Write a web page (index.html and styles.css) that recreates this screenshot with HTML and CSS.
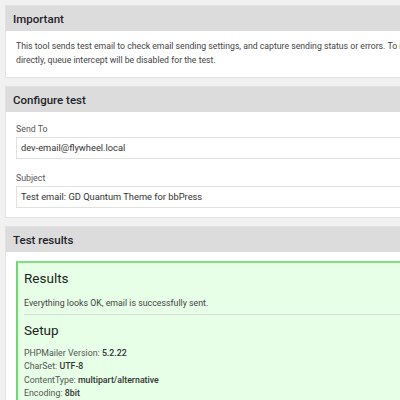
FILE: index.html
```html
<!DOCTYPE html>
<html>
<head>
<meta charset="utf-8">
<link rel="stylesheet" href="styles.css">
</head>
<body>
<div class="page">
  <div class="panel">
    <div class="panel-head">Important</div>
    <div class="panel-body">
      <p class="note">This tool sends test email to check email sending settings, and capture sending status or errors. To make sure that email is sent directly, queue intercept will be disabled for the test.</p>
    </div>
  </div>
  <div class="panel">
    <div class="panel-head">Configure test</div>
    <div class="panel-body form">
      <label class="lbl">Send To</label>
      <div class="input">dev-email@flywheel.local</div>
      <label class="lbl">Subject</label>
      <div class="input">Test email: GD Quantum Theme for bbPress</div>
    </div>
  </div>
  <div class="panel">
    <div class="panel-head">Test results</div>
    <div class="panel-body results">
      <div class="success">
        <h3>Results</h3>
        <p class="msg">Everything looks OK, email is successfully sent.</p>
        <hr>
        <h3>Setup</h3>
        <ul class="info">
          <li>PHPMailer Version: <b>5.2.22</b></li>
          <li>CharSet: <b>UTF-8</b></li>
          <li>ContentType: <b>multipart/alternative</b></li>
          <li>Encoding: <b>8bit</b></li>
        </ul>
      </div>
    </div>
  </div>
</div>
</body>
</html>
```
FILE: styles.css
```css
html, body { margin: 0; padding: 0; }
body {
  background: #f1f1f1;
  font-family: Roboto, "Open Sans", sans-serif;
  color: #333;
  width: 530px;
  overflow: hidden;
}
.page {
  padding: 5px 0 0 5px;
  display: flex;
  flex-direction: column;
  gap: 8px;
}
.panel {
  border: 1px solid #e2e2e2;
  background: #fff;
}
.panel-head {
  background: #dcdcdc;
  height: 25px;
  line-height: 26px;
  padding: 0 7px;
  font-size: 11.5px;
  font-weight: 500;
  color: #1e2327;
}
.panel-body {
  padding: 8px 10px 10px;
}
.note {
  margin: 0;
  font-size: 8.7px;
  line-height: 14px;
  color: #444;
}
.form { padding: 10px 10px 9px; display: flex; flex-direction: column; }
.lbl { font-size: 8.8px; line-height: 14px; color: #555; margin-bottom: 1px; }
.input {
  height: 20px;
  border: 1px solid #e1e1e1;
  background: #fff;
  font-size: 9.3px;
  line-height: 20px;
  padding: 0 4px;
  color: #333;
  margin-bottom: 12px;
}
.input:last-child { margin-bottom: 0; }
.results { padding: 9px 10px; }
.success {
  background: #e6ffe6;
  border-top: 2px solid #7fe07f;
  border-left: 2px solid #6fd86f;
  padding: 5px 8px 10px 6px;
}
.success h3 {
  margin: 0;
  font-size: 13.5px;
  font-weight: 400;
  color: #222;
  line-height: 20px;
}
.msg { margin: 8px 0 4px; font-size: 8.8px; line-height: 14px; color: #444; }
.success hr { border: 0; border-top: 1px solid #d6dcd6; margin: 0 0 5px; }
.info { list-style: none; margin: 7px 0 0; padding: 0; font-size: 8.8px; line-height: 13.4px; color: #555; }
.info b { color: #333; font-weight: 500; }
```
